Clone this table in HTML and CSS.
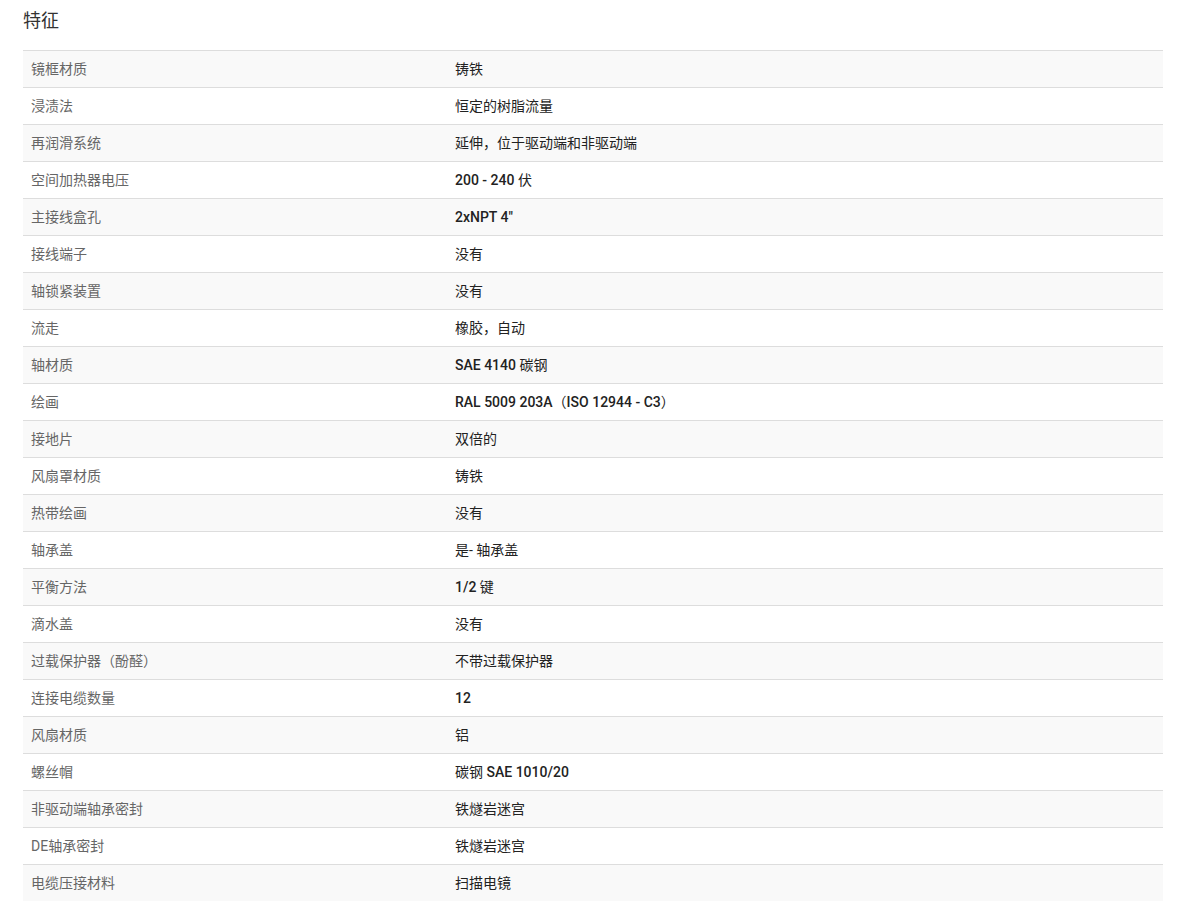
FILE: index.html
```html
<!DOCTYPE html>
<html lang="zh-CN">
<head>
<meta charset="utf-8">
<link rel="stylesheet" href="styles.css">
</head>
<body>
<div class="page">
  <h2 class="title">特征</h2>
  <table class="specs">
    <tbody>
      <tr><td class="label">镜框材质</td><td class="value">铸铁</td></tr>
      <tr><td class="label">浸渍法</td><td class="value">恒定的树脂流量</td></tr>
      <tr><td class="label">再润滑系统</td><td class="value">延伸，位于驱动端和非驱动端</td></tr>
      <tr><td class="label">空间加热器电压</td><td class="value"><span class="latin">200 - 240</span> 伏</td></tr>
      <tr><td class="label">主接线盒孔</td><td class="value"><span class="latin">2xNPT 4"</span></td></tr>
      <tr><td class="label">接线端子</td><td class="value">没有</td></tr>
      <tr><td class="label">轴锁紧装置</td><td class="value">没有</td></tr>
      <tr><td class="label">流走</td><td class="value">橡胶，自动</td></tr>
      <tr><td class="label">轴材质</td><td class="value"><span class="latin">SAE 4140</span> 碳钢</td></tr>
      <tr><td class="label">绘画</td><td class="value"><span class="latin">RAL 5009 203A</span>（<span class="latin">ISO 12944 - C3</span>）</td></tr>
      <tr><td class="label">接地片</td><td class="value">双倍的</td></tr>
      <tr><td class="label">风扇罩材质</td><td class="value">铸铁</td></tr>
      <tr><td class="label">热带绘画</td><td class="value">没有</td></tr>
      <tr><td class="label">轴承盖</td><td class="value">是- 轴承盖</td></tr>
      <tr><td class="label">平衡方法</td><td class="value"><span class="latin">1/2</span> 键</td></tr>
      <tr><td class="label">滴水盖</td><td class="value">没有</td></tr>
      <tr><td class="label">过载保护器（酚醛）</td><td class="value">不带过载保护器</td></tr>
      <tr><td class="label">连接电缆数量</td><td class="value"><span class="latin">12</span></td></tr>
      <tr><td class="label">风扇材质</td><td class="value">铝</td></tr>
      <tr><td class="label">螺丝帽</td><td class="value">碳钢 <span class="latin">SAE 1010/20</span></td></tr>
      <tr><td class="label">非驱动端轴承密封</td><td class="value">铁燧岩迷宫</td></tr>
      <tr><td class="label">DE轴承密封</td><td class="value">铁燧岩迷宫</td></tr>
      <tr><td class="label">电缆压接材料</td><td class="value">扫描电镜</td></tr>
    </tbody>
  </table>
</div>
</body>
</html>
```

FILE: styles.css
```css
html, body {
  margin: 0;
  padding: 0;
  background: #fff;
}

body {
  font-family: Roboto, "Noto Sans CJK SC", sans-serif;
  color: #333;
}

.page {
  padding: 0 20px 0 23px;
}

.title {
  margin: 0;
  padding-top: 9px;
  height: 50px;
  box-sizing: border-box;
  font-size: 18px;
  font-weight: 400;
  line-height: 24px;
  color: #333;
}

.specs {
  width: 1140px;
  border-collapse: collapse;
  font-size: 14px;
}

.specs td {
  height: 36px;
  padding: 0 8px;
  border-top: 1px solid #ddd;
  line-height: 20px;
  vertical-align: middle;
}

.specs tr:nth-child(odd) td {
  background: #f9f9f9;
}

.label {
  width: 408px;
  color: #666;
}

.value {
  color: #222;
  font-weight: 400;
}

.latin {
  font-weight: 500;
}
```
